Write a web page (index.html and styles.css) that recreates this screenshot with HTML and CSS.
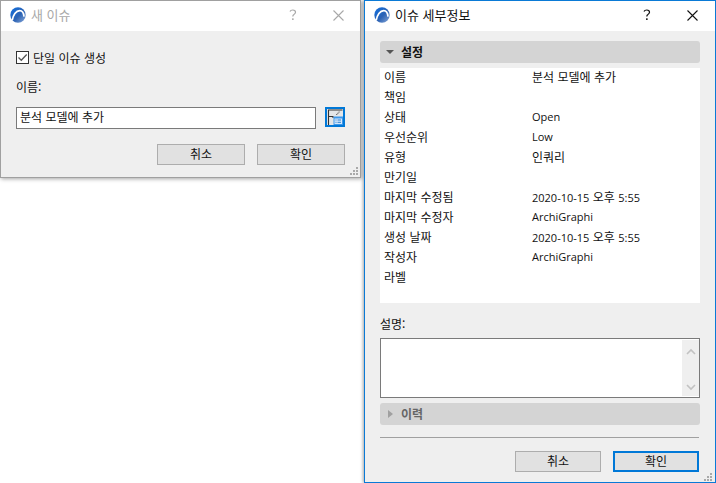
FILE: index.html
```html
<!DOCTYPE html>
<html lang="ko">
<head>
<meta charset="utf-8">
<title>이슈</title>
<link rel="stylesheet" href="styles.css">
</head>
<body>
<svg class="defs" width="0" height="0" aria-hidden="true">
  <defs>
    <linearGradient id="sphere" x1="0" y1="0" x2="1" y2="1">
      <stop offset="0" stop-color="#0f6fe0"/>
      <stop offset=".55" stop-color="#2b62b4"/>
      <stop offset="1" stop-color="#8aa9d8"/>
    </linearGradient>
  </defs>
  <symbol id="logo" viewBox="0 0 16 16">
    <circle cx="8" cy="8" r="7.7" fill="url(#sphere)"/>
    <path d="M2.200 13.500C3 8 6 3.600 9.800 3.600c2.600 0 3.900 2.600 4.200 6" fill="none" stroke="#fff" stroke-width="1.700"/>
  </symbol>
  <symbol id="grip" viewBox="0 0 10 10">
    <path d="M7 1h2v2H7zM4 4h2v2H4zM7 4h2v2H7zM1 7h2v2H1zM4 7h2v2H4zM7 7h2v2H7z" fill="#a9a9a9"/>
  </symbol>
  <symbol id="help" viewBox="0 0 10 12">
    <path d="M2 2.500C2.500 1.300 3.500 1 4.800 1c1.700 0 2.700.9 2.700 2.200 0 1.200-.8 1.700-1.600 2.300-.7.500-1.100 1-1.100 2" fill="none" stroke="currentColor" stroke-width="1.200"/>
    <rect x="4.100" y="9.300" width="1.500" height="1.700" fill="currentColor"/>
  </symbol>
  <symbol id="close" viewBox="0 0 11 11">
    <path d="M.5.500l10 10M10.500.5l-10 10" fill="none" stroke="currentColor" stroke-width="1.100"/>
  </symbol>
</svg>

<section class="window window-new">
  <header class="titlebar titlebar-inactive">
    <svg class="logo"><use href="#logo"/></svg>
    <span class="title">새 이슈</span>
    <svg class="help"><use href="#help"/></svg>
    <svg class="close"><use href="#close"/></svg>
  </header>
  <div class="new-body">
    <label class="check-row">
      <span class="checkbox">
        <svg viewBox="0 0 11 11" width="11" height="11"><path d="M1.500 5.500 4.300 8.300 9.700 2.500" fill="none" stroke="#555" stroke-width="1.300"/></svg>
      </span>
      <span class="check-label">단일 이슈 생성</span>
    </label>
    <div class="name-label">이름:</div>
    <div class="input-row">
      <div class="text-input">분석 모델에 추가</div>
      <div class="icon-btn">
        <svg viewBox="0 0 20 20" width="20" height="20">
          <rect width="20" height="20" fill="#0078d7"/>
          <rect x="2" y="2" width="16" height="16" fill="#e4e6e8"/>
          <path d="M3.500 18V3h14M3.500 9.500h4.500v1.500" fill="none" stroke="#333" stroke-width="1.100"/>
          <path d="M11 7.500h1.200v-1.200h1.200v-1.200h1.200v-1.200" fill="none" stroke="#777" stroke-width="1" stroke-dasharray="1.500 .8"/>
          <rect x="8.500" y="9.500" width="9.500" height="8.500" fill="#3d97ea"/>
          <rect x="9.500" y="11.500" width="7.500" height="5.500" fill="#d3e8fb"/>
          <path d="M10.500 13h1M12.500 13h3.500M10.500 15.300h1M12.500 15.300h3.500" stroke="#2e7fd0" stroke-width="1"/>
        </svg>
      </div>
    </div>
    <div class="button-row button-row-new">
      <button class="btn">취소</button>
      <button class="btn">확인</button>
    </div>
  </div>
  <svg class="grip"><use href="#grip"/></svg>
</section>

<section class="window window-detail">
  <header class="titlebar">
    <svg class="logo"><use href="#logo"/></svg>
    <span class="title">이슈 세부정보</span>
    <svg class="help"><use href="#help"/></svg>
    <svg class="close"><use href="#close"/></svg>
  </header>
  <div class="detail-body">
    <div class="section-head">
      <span class="tri-down"></span>
      <span class="section-title">설정</span>
    </div>
    <div class="props">
      <div class="prop"><span class="k">이름</span><span>분석 모델에 추가</span></div>
      <div class="prop"><span class="k">책임</span><span></span></div>
      <div class="prop"><span class="k">상태</span><span class="latin">Open</span></div>
      <div class="prop"><span class="k">우선순위</span><span class="latin">Low</span></div>
      <div class="prop"><span class="k">유형</span><span>인쿼리</span></div>
      <div class="prop"><span class="k">만기일</span><span></span></div>
      <div class="prop"><span class="k">마지막 수정됨</span><span><span class="latin">2020-10-15</span> 오후 <span class="latin">5:55</span></span></div>
      <div class="prop"><span class="k">마지막 수정자</span><span class="latin">ArchiGraphi</span></div>
      <div class="prop"><span class="k">생성 날짜</span><span><span class="latin">2020-10-15</span> 오후 <span class="latin">5:55</span></span></div>
      <div class="prop"><span class="k">작성자</span><span class="latin">ArchiGraphi</span></div>
      <div class="prop"><span class="k">라벨</span><span></span></div>
    </div>
    <div class="desc-label">설명:</div>
    <div class="textarea">
      <div class="scrollbar">
        <svg viewBox="0 0 10 7" width="10" height="7"><path d="M1 6l4-4 4 4" fill="none" stroke="#c2c2c2" stroke-width="1.600"/></svg>
        <svg viewBox="0 0 10 7" width="10" height="7"><path d="M1 1l4 4 4-4" fill="none" stroke="#c2c2c2" stroke-width="1.600"/></svg>
      </div>
    </div>
    <div class="section-head section-head-history">
      <span class="tri-right"></span>
      <span class="section-title section-title-muted">이력</span>
    </div>
    <div class="divider"></div>
    <div class="button-row button-row-detail">
      <button class="btn">취소</button>
      <button class="btn btn-default">확인</button>
    </div>
  </div>
  <svg class="grip"><use href="#grip"/></svg>
</section>
</body>
</html>
```
FILE: styles.css
```css
* { box-sizing: border-box; }
html, body { margin: 0; padding: 0; }
body {
  width: 716px;
  height: 483px;
  position: relative;
  overflow: hidden;
  background: #fff;
  font-family: "Noto Sans CJK KR", "Open Sans", sans-serif;
  font-size: 12px;
  color: #111;
}
.latin { font-family: "Open Sans", "Noto Sans CJK KR", sans-serif; font-size: 11px; }
.defs { position: absolute; }
.window {
  position: absolute;
  background: #efefef;
}
.window-new {
  left: 0;
  top: 0;
  width: 361px;
  height: 178px;
  border: 1px solid #a0a0a0;
  box-shadow: 1px 1px 4px rgba(0,0,0,.35);
}
.window-detail {
  left: 364px;
  top: 0;
  width: 352px;
  height: 483px;
  border: 1px solid #0a7ad6;
  box-shadow: -1px 0 3px rgba(0,0,0,.35);
}
.titlebar {
  height: 30px;
  background: #fff;
  display: flex;
  align-items: center;
  padding: 0 0 2px 9px;
  color: #111;
}
.titlebar-inactive { color: #a8a8a8; }
.logo { width: 16px; height: 16px; flex: none; }
.title { margin-left: 5px; font-size: 13px; flex: 1; padding-bottom: 1px; }
.help { width: 10px; height: 12px; margin-right: 35px; }
.close { width: 11px; height: 11px; margin-right: 17px; }
.window-new .close { margin-right: 16px; }

.new-body { padding: 20px 15px 0; }
.check-row { display: flex; align-items: center; height: 13px; }
.checkbox {
  width: 13px; height: 13px;
  border: 1px solid #333;
  background: #fff;
  display: flex;
  flex: none;
}
.check-label { margin-left: 4px; }
.name-label { margin-top: 15px; height: 16px; line-height: 16px; }
.input-row { display: flex; align-items: flex-start; margin-top: 12px; gap: 9px; }
.text-input {
  width: 300px; height: 22px;
  background: #fff;
  border: 1px solid #7a7a7a;
  padding-left: 3px;
  line-height: 18px;
}
.icon-btn { width: 20px; height: 20px; flex: none; display: flex; }
.button-row { display: flex; justify-content: flex-end; }
.button-row-new { gap: 12px; margin-top: 15px; }
.btn {
  width: 88px; height: 21px;
  background: #e1e1e1;
  border: 1px solid #adadad;
  font: inherit;
  color: #111;
  padding: 0 0 2px;
  line-height: 15px;
}
.grip { position: absolute; right: 1px; bottom: 1px; width: 10px; height: 10px; }
.window-detail .grip { right: 2px; bottom: 0; }

.detail-body { padding: 10px 15px 0; }
.section-head {
  height: 22px;
  background: #d4d4d4;
  border-radius: 3px;
  display: flex;
  align-items: center;
  padding-left: 6px;
}
.tri-down {
  width: 0; height: 0;
  border-left: 4px solid transparent;
  border-right: 4px solid transparent;
  border-top: 4px solid #555;
}
.tri-right {
  width: 0; height: 0;
  margin-left: 2px;
  border-top: 4px solid transparent;
  border-bottom: 4px solid transparent;
  border-left: 5px solid #a0a0a0;
}
.section-title { margin-left: 7px; font-weight: 700; padding-bottom: 2px; }
.section-title-muted { color: #666; margin-left: 8px; }
.props {
  margin-top: 5px;
  height: 235px;
  background: #fff;
  padding-left: 4px;
  padding-top: 2px;
}
.prop { display: flex; height: 20px; line-height: 14px; }
.k { width: 148px; flex: none; }
.desc-label { margin-top: 13px; height: 16px; line-height: 16px; }
.textarea {
  margin-top: 6px;
  height: 60px;
  width: 320px;
  background: #fff;
  border: 1px solid #7a7a7a;
  display: flex;
  justify-content: flex-end;
}
.scrollbar {
  width: 17px;
  margin: 1px 0;
  background: #efefef;
  display: flex;
  flex-direction: column;
  justify-content: space-between;
  align-items: center;
  padding: 8px 0 5px;
}
.section-head-history { margin-top: 5px; }
.divider { margin-top: 12px; height: 1px; width: 319px; background: #a0a0a0; }
.button-row-detail { width: 319px; gap: 12px; margin-top: 13px; }
.button-row-detail .btn { width: 86px; }
.btn-default { border: 2px solid #0078d7; }
```
